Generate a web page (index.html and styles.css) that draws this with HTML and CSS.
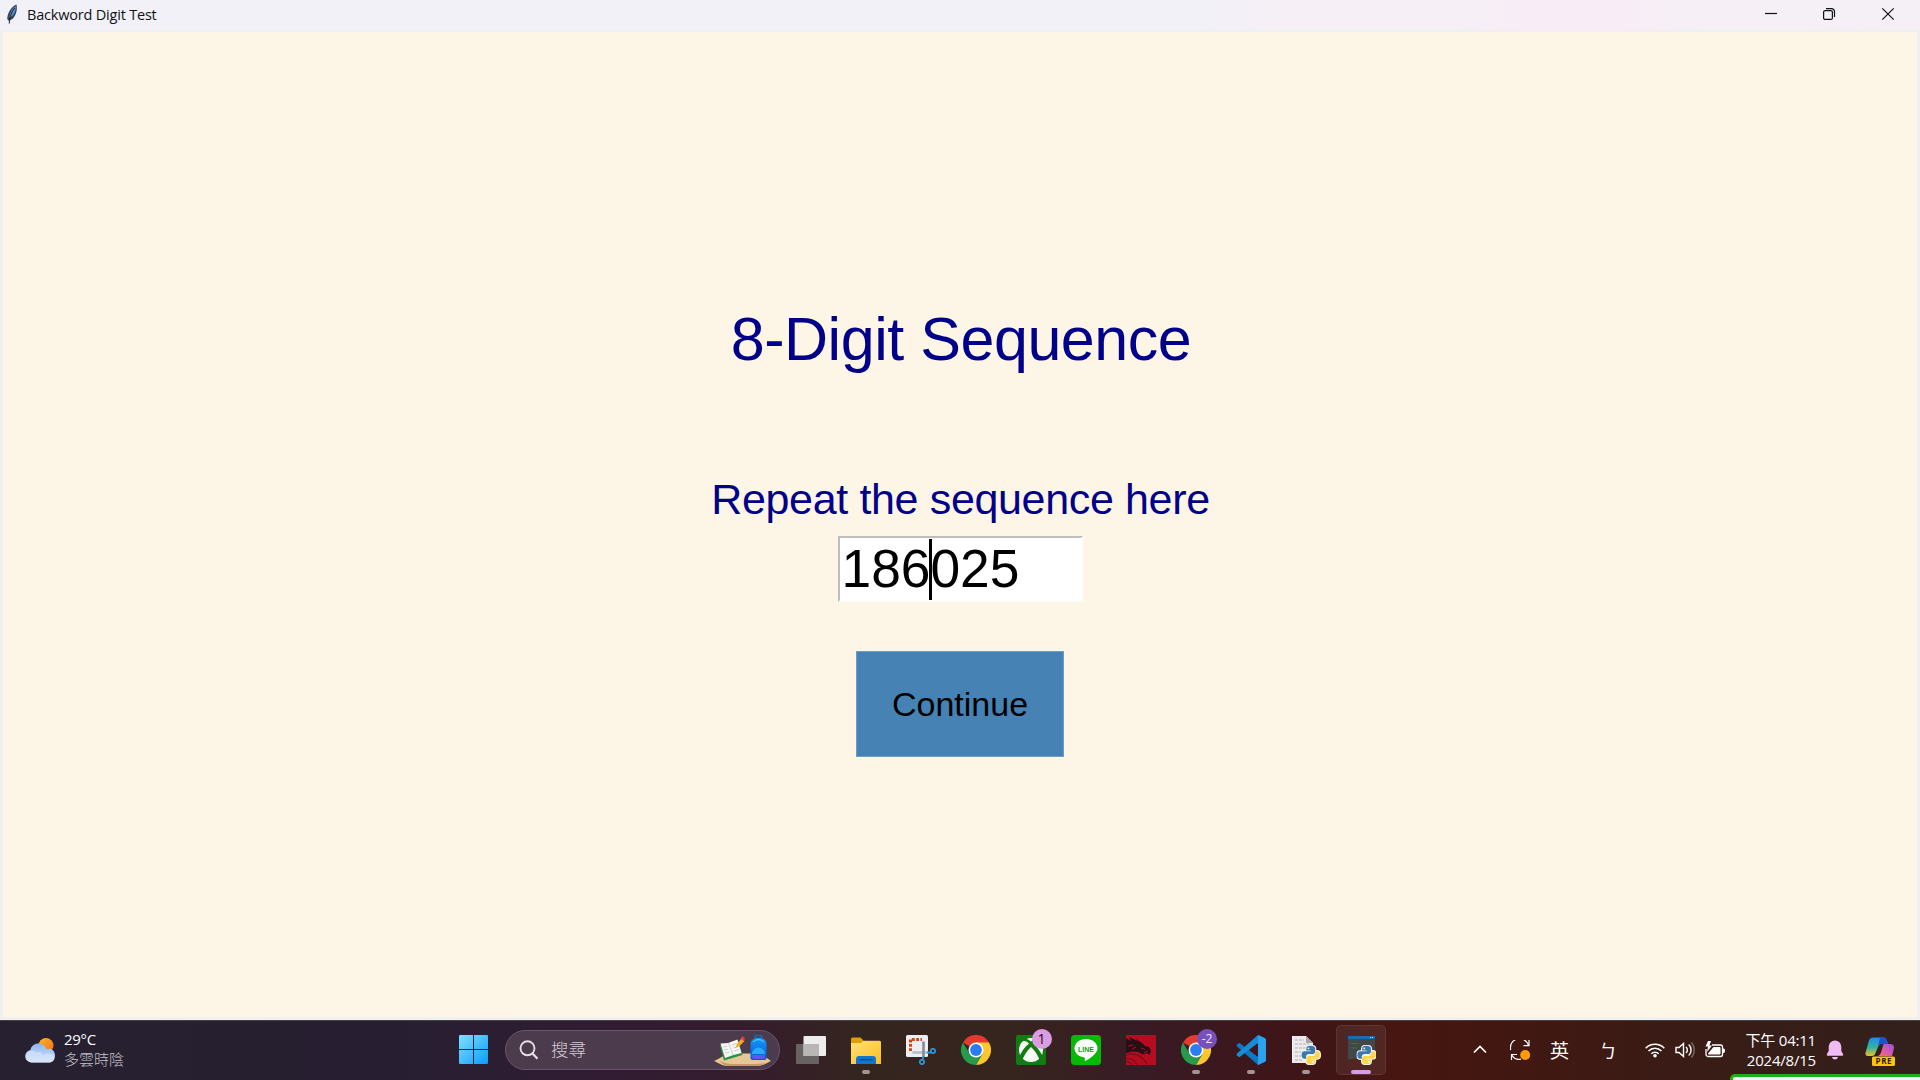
FILE: index.html
```html
<!DOCTYPE html>
<html lang="zh-Hant">
<head>
<meta charset="utf-8">
<title>Backword Digit Test</title>
<link rel="stylesheet" href="styles.css">
</head>
<body>
<svg class="defs" width="0" height="0">
  <defs>
    <linearGradient id="win" x1="0" y1="0" x2="1" y2="1"><stop offset="0" stop-color="#7fe0ff"/><stop offset="1" stop-color="#0a9bfb"/></linearGradient>
    <linearGradient id="cloud" x1="0" y1="0" x2="0" y2="1"><stop offset="0" stop-color="#8db4f2"/><stop offset="1" stop-color="#d6e4fb"/></linearGradient>
    <linearGradient id="sun" x1="0" y1="0" x2="1" y2="1"><stop offset="0" stop-color="#fdb62b"/><stop offset="1" stop-color="#f2700c"/></linearGradient>
    <linearGradient id="folder" x1="0" y1="0" x2="1" y2="1"><stop offset="0" stop-color="#ffe27a"/><stop offset="1" stop-color="#fdbd1f"/></linearGradient>
    <linearGradient id="pack" x1="0" y1="0" x2="0" y2="1"><stop offset="0" stop-color="#149af5"/><stop offset="1" stop-color="#0757d8"/></linearGradient>
    <linearGradient id="copA" x1="0" y1="0" x2="0" y2="1"><stop offset="0" stop-color="#1a8ef0"/><stop offset=".55" stop-color="#35b3a0"/><stop offset="1" stop-color="#ecc61a"/></linearGradient>
    <linearGradient id="copB" x1="1" y1="0" x2="0" y2="1"><stop offset="0" stop-color="#a34bea"/><stop offset="1" stop-color="#ff6a72"/></linearGradient>
    <symbol id="chrome" viewBox="0 0 30 30">
      <path d="M15 15 2 7.5A15 15 0 0 1 28 7.500Z" fill="#e33b2e"/>
      <path d="M15 15V7.500H28A15 15 0 0 1 15 30l6.500-11.250Z" fill="#fcc62d"/>
      <path d="M15 15 21.500 18.750 15 30A15 15 0 0 1 2 7.500L8.500 18.750Z" fill="#259b4b"/>
      <circle cx="15" cy="15" r="7.500" fill="#fff"/><circle cx="15" cy="15" r="5.900" fill="#2b7cf0"/>
    </symbol>
    <symbol id="python" viewBox="0 0 20 20">
      <g stroke="#f4f4f4" stroke-width="2.200" stroke-linejoin="round">
        <path id="snake" d="M9.800.800C6.500.800 5.600 1.800 5.600 3.500V5.600H10V6.300H3.600C1.700 6.300.800 7.800.800 10s1 3.800 2.800 3.800H5.300V11.500c0-1.500 1.200-2.600 2.700-2.600h4.200c1.200 0 2.200-1 2.200-2.200V3.500C14.400 1.600 12.800.800 9.800.800Z"/>
        <use href="#snake" transform="rotate(180 10 10)"/>
      </g>
      <use href="#snake" fill="#3a78ad"/>
      <use href="#snake" fill="#fdd648" transform="rotate(180 10 10)"/>
      <circle cx="7.700" cy="3.300" r=".9" fill="#fff"/><circle cx="12.300" cy="16.700" r=".9" fill="#fff"/>
    </symbol>
  </defs>
</svg>

<header class="titlebar">
  <svg class="feather" width="12" height="20" viewBox="0 0 12 20"><path d="M10.500.500C6 2 1.500 8 1.200 15L3 17l4-2.500C10 11 11.500 6 10.500.500Z" fill="#3a414b"/><path d="M9.800 2C6 4.500 3.600 9 3.200 14 7.500 12 10.200 7 9.800 2Z" fill="#5590dc"/><path d="M8.700 4C5.500 8 3.800 12 3.200 19.500" stroke="#1b1d22" fill="none"/></svg>
  <span class="title">Backword Digit Test</span>
  <div class="controls">
    <svg width="14" height="14" viewBox="0 0 14 14"><path d="M1 6.500H13" stroke="#111" stroke-width="1.200"/></svg>
    <svg width="14" height="14" viewBox="0 0 14 14" fill="none" stroke="#111" stroke-width="1.200"><rect x="1.600" y="3.600" width="8.800" height="8.800" rx="1.500"/><path d="M4 1.600H9.500A3 3 0 0 1 12.500 4.600V10"/></svg>
    <svg width="14" height="14" viewBox="0 0 14 14"><path d="M1.300 1.300 12.700 12.700M12.700 1.300 1.300 12.700" stroke="#111" stroke-width="1.200"/></svg>
  </div>
</header>

<main class="client">
  <h1 class="heading">8-Digit Sequence</h1>
  <label class="prompt">Repeat the sequence here</label>
  <div class="entry"><span>186</span><i class="caret"></i><span>025</span></div>
  <button class="continue">Continue</button>
</main>

<footer class="taskbar">
  <section class="weather">
    <svg width="32" height="28" viewBox="0 0 32 28"><circle cx="22" cy="8.500" r="7.500" fill="url(#sun)"/><path d="M7 25.500a6.300 6.300 0 0 1-.5-12.500C7 9 10.500 6.500 14.500 6.500c4 0 7 2.500 8 6 4.500-2.500 8.500 1.500 8.500 6s-3 7-6.500 7Z" fill="url(#cloud)"/><path d="M8 25.500a6 6 0 1 1 4.500-10c3-1.500 6 .3 6.800 3 4-3.500 11-2 11 2.500 0 3-2.500 4.500-5 4.500Z" fill="#d8e5fb" opacity=".65"/></svg>
    <div class="weather-text"><span>29°C</span><span class="dim">多雲時陰</span></div>
  </section>

  <nav class="apps">
    <div class="slot"><svg width="29" height="29" viewBox="0 0 29 29"><path d="M1 0H14V14H0V1a1 1 0 0 1 1-1ZM15 0H28a1 1 0 0 1 1 1V14H15ZM0 15H14V29H1a1 1 0 0 1-1-1ZM15 15H29V28a1 1 0 0 1-1 1H15Z" fill="url(#win)"/></svg></div>
    <div class="search">
      <svg width="20" height="20" viewBox="0 0 20 20" fill="none" stroke="#e4dde3" stroke-width="1.900"><circle cx="8.500" cy="8.300" r="7"/><path d="M13.500 13.500 18.500 18.700" stroke-width="2.300"/></svg>
      <span>搜尋</span>
      <svg class="school" width="58" height="32" viewBox="0 0 58 32"><path d="M0 26C8 23 10 18.500 18 18.500H42C50 19 52 23 57 26c-4 2-8 5-14 5H14C8 31 5 28 0 26Z" fill="#e6c795"/><path d="M6 26Q12 29.500 20 29H40Q50 29 53 27.500 48 31 43 31H14Q8 30 6 26Z" fill="#c49a66"/><path d="M6 10.500 24 5.500 28.500 20 10 25.500Z" fill="#2c9147"/><path d="M6.500 8.500 14 8 23.500 4.500 27.500 18 19.500 20 11 23Z" fill="#f5f5f2"/><path d="M14.500 8 19 20M9 12l4-.8M10 15l4-.8M11 18l4-.8M18 10l5-1.500M19 13l5-1.500M20 16l5-1.500" stroke="#c8cac5" fill="none" stroke-width=".9"/><path d="M21.500 13 23 9 27.500 3.500 30.500 6 25.500 11Z" fill="#f7a91e"/><path d="M26.500 3.500 28.500 1.200 31 3.300 29.500 6Z" fill="#e43c40"/><path d="M41 3a3.500 3 0 0 1 7 0" stroke="#0a70d8" stroke-width="1.500" fill="none"/><path d="M36.500 9C36.500 .5 52.500 .5 52.500 9V23a2 2 0 0 1-2 2H38.500a2 2 0 0 1-2-2Z" fill="url(#pack)"/><path d="M38 19a6.500 6.500 0 0 1 13 0" fill="#2aa9f8"/><path d="M38 20H51V21.500q0 2.500-2 2.500H40q-2 0-2-2.500Z" fill="#6556e8"/><path d="M39 7Q44.500 2 50 7" stroke="#61d1ff" fill="none"/></svg>
    </div>
    <div class="slot"><svg width="30" height="30" viewBox="0 0 30 30"><rect x="0" y="9" width="23" height="20" rx="1" fill="#666362"/><rect x="7.500" y="1" width="22.500" height="20" rx="1" fill="#ededed"/><path d="M7.500 9H23V21H7.500Z" fill="#b9b7b6"/></svg></div>
    <div class="slot"><svg width="30" height="30" viewBox="0 0 30 30"><path d="M0 4a1.500 1.500 0 0 1 1.500-1.500H9.500L13 6H29V14H0Z" fill="#dda005"/><path d="M0 8H9.500L13 5.800H28.500A1.500 1.500 0 0 1 30 7.300V29H0Z" fill="url(#folder)"/><path d="M5 29V24a3 3 0 0 1 3-3H22a3 3 0 0 1 3 3v5Z" fill="#1077cf"/><path d="M8.500 24.700H21.500" stroke="#064a92" stroke-width="1.300"/></svg><b class="run"></b></div>
    <div class="slot"><svg width="30" height="30" viewBox="0 0 30 30"><rect x="0" y="0" width="22" height="22" rx="1.500" fill="#eceff3"/><path d="M4.500 16V4.500H16" fill="none" stroke="#cf4413" stroke-width="3" stroke-dasharray="2.800 1.500"/><path d="M6.500 17.500H22" stroke="#b7bcc1" stroke-width="2.500"/><path d="M17.500 6.500V22" stroke="#858c93" stroke-width="2.600"/><path d="M21 17.500H25M17.500 21 16.500 25" stroke="#2899df" stroke-width="1.800"/><circle cx="27" cy="16" r="2.200" fill="none" stroke="#2899df" stroke-width="1.700"/><circle cx="16" cy="27" r="2.200" fill="none" stroke="#2899df" stroke-width="1.700"/></svg></div>
    <div class="slot"><svg width="30" height="30"><use href="#chrome"/></svg></div>
    <div class="slot"><svg width="30" height="30" viewBox="0 0 30 30"><rect width="30" height="30" rx="2" fill="#127c12"/><circle cx="15" cy="15" r="12" fill="#f7f9f7"/><path d="M6 3Q11 3 15 6.500 19 3 24 3L26 7Q21 4.500 17 8.500 24 14.500 27 22.500L24 26Q21 17.500 15 12 9 17.500 6 26L3 22.500Q6 14.500 13 8.500 9 4.500 4.500 7Z" fill="#127c12"/></svg><em class="badge">1</em></div>
    <div class="slot"><svg width="30" height="30" viewBox="0 0 30 30"><rect width="30" height="30" rx="3.500" fill="#05b905"/><path d="M15 4C8.500 4 3.500 8.200 3.500 13.300c0 4.700 4 8.400 9.700 9.200.9.200.6 1.300.5 2.500-.1 1 .6 1.200 1.500.6 4-2.300 11.300-7 11.300-12.300C26.500 8.200 21.500 4 15 4Z" fill="#fff"/><text x="15" y="16.500" text-anchor="middle" class="line-label" textLength="16">LINE</text></svg></div>
    <div class="slot"><svg width="30" height="30" viewBox="0 0 30 30"><rect width="30" height="30" fill="#b60c20"/><path d="M0 3 5 6 3 2 11 6 9 3.500 16 8 19 11 23 12 25 16 23.500 20 21 18 17 19.500 12 17 6 16.500 0 18Z" fill="#251016"/><path d="M0 20Q9 17 15 22T21 30M0 24Q7 22 11 30M0 27Q4 26 6 30" fill="none" stroke="#7e0b1c" stroke-width="1.200"/><path d="M15 13 19 14.500M18 17.500 22 16M2 11 7 10M6 14 10 12" stroke="#b60c20"/></svg></div>
    <div class="slot"><svg width="30" height="30"><use href="#chrome"/></svg><em class="badge purple">-2</em><b class="run"></b></div>
    <div class="slot"><svg width="30" height="30" viewBox="0 0 30 30"><path d="M22 0 29 3.200Q30 4 30 5V25q0 1-1 1.700L22 30 1 11.500Q0 10.500 1 9.500L2.500 8.300Q3.200 7.800 4 8.300L22 22Z" fill="#0c78c4"/><path d="M22 8 4 21.700Q3.200 22.200 2.500 21.700L1 20.500Q0 19.500 1 18.500L22 0Z" fill="#168bd6"/><path d="M22 0 29 3.200Q30 4 30 5V25q0 1-1 1.700L22 30Z" fill="#2ba2ed"/></svg><b class="run"></b></div>
    <div class="slot"><svg width="30" height="30" viewBox="0 0 30 30"><path d="M1 1H15L22 8V28H1Z" fill="#eceaea"/><path d="M15 1V8H22Z" fill="#aaa6a6"/><path d="M4 5H13M4 9H18M4 13H19M4 17H12M4 21H11M4 25H12" stroke="#b4b0b0" stroke-dasharray="3 1"/><path d="M1.500 1V28" stroke="#fff" stroke-dasharray="2 1.500"/><use href="#python" x="9.500" y="10" width="20.500" height="20"/></svg><b class="run"></b></div>
    <div class="slot active"><svg width="30" height="30" viewBox="0 0 30 30"><rect x="2" y="1" width="27" height="23" fill="#42474a"/><rect x="2" y="1" width="27" height="3" fill="#176dae"/><path d="M5 8.500H13M5 13H11M15 13H18" stroke="#357246" stroke-width="1.200"/><path d="M24 2.500h1M26 2.500h1" stroke="#cde"/><use href="#python" x="10.500" y="10" width="20" height="20"/></svg><b class="run"></b></div>
  </nav>

  <section class="tray">
    <div class="t-chevron"><svg width="14" height="9" viewBox="0 0 14 9"><path d="M1 7.500 7 1.500 13 7.500" fill="none" stroke="#fff" stroke-width="1.700"/></svg></div>
    <div class="t-sync"><svg width="20" height="20" viewBox="0 0 20 20" fill="none" stroke="#fff" stroke-width="1.200"><path d="M.700 10A9 9 0 0 1 18.500 5.500M19 0V5.700H13.500M1.500 20V14.500H7M1.500 14.500A9 9 0 0 0 11 19.200"/><circle cx="15.200" cy="15" r="5" fill="#ff9b09" stroke="none"/></svg></div>
    <div class="t-lang">英</div>
    <div class="t-ime">ㄅ</div>
    <div class="t-wifi"><svg width="20" height="16" viewBox="0 0 20 16" fill="none" stroke="#fff" stroke-width="1.500"><path d="M.700 6.200A13 13 0 0 1 19.300 6.200M3.500 9A9 9 0 0 1 16.500 9M6.300 11.800A5.200 5.200 0 0 1 13.700 11.800"/><circle cx="10" cy="13.800" r="1.800" fill="#fff" stroke="none"/></svg></div>
    <div class="t-sound"><svg width="20" height="16" viewBox="0 0 20 16" fill="none" stroke="#fff" stroke-width="1.400"><path d="M1 5.500H4L8.500 1.500V14.500L4 10.500H1Z"/><path d="M11 5a4 4 0 0 1 0 6M13.700 2.500a7.500 7.500 0 0 1 0 11"/><path d="M16.300.500a11 11 0 0 1 0 15" stroke="#7c6662"/></svg></div>
    <div class="t-battery"><svg width="20" height="17" viewBox="0 0 20 17"><path d="M7 4H15.500A2 2 0 0 1 17.500 6V13.500A2 2 0 0 1 15.500 15.500H3A2 2 0 0 1 1 13.500V8" fill="none" stroke="#fff" stroke-width="1.300"/><path d="M8.500 6H14.500Q15.500 6 15.500 7V12.500Q15.500 13.500 14.500 13.500H3.500L3 12.500Z" fill="#fff"/><path d="M18 7.500H18.700Q20 7.500 20 9.700T18.700 12H18ZM3 0 .500 5.500H3L2 11 7 4.500H4.500L6 0Z" fill="#fff"/></svg></div>
    <div class="clock"><span>下午 04:11</span><span class="date">2024/8/15</span></div>
    <div class="t-bell"><svg width="18" height="20" viewBox="0 0 18 20"><path d="M9 .5A6.300 6.300 0 0 0 2.700 6.800V11L.8 14.300Q.5 15.800 2 15.800H16Q17.500 15.800 17.200 14.300L15.300 11V6.800A6.300 6.300 0 0 0 9 .5ZM6 17H12Q11.500 19.500 9 19.500T6 17Z" fill="#efbbf4"/></svg></div>
    <div class="t-copilot"><svg width="30" height="30" viewBox="0 0 30 30"><path d="M8 1.500H19Q21.500 2 22 5L23 8H16Q14 8 13 11L10.500 17Q9.500 20 7 20H3Q-.5 20 .7 16L4 4.500Q5 1.500 8 1.500Z" fill="url(#copA)"/><path d="M15 1.500H19Q21.500 2 22 5L23 8H16Q14 8 13 10Z" fill="#2050cf"/><path d="M18.500 8H25.500Q30 8.500 28.800 13L27 20H13Q15.500 19 16.500 15Z" fill="url(#copB)"/><rect x="7" y="20.500" width="23" height="9.500" rx="1.500" fill="#fcc603"/><text x="18.500" y="28.300" text-anchor="middle" class="pre" textLength="16">PRE</text></svg></div>
  </section>
</footer>
<div class="peek"></div>
</body>
</html>
```
FILE: styles.css
```css
* { box-sizing: border-box; }
body {
  margin: 0;
  width: 1920px;
  height: 1080px;
  overflow: hidden;
  display: flex;
  flex-direction: column;
  background: #f0f0f0;
  font-family: "Liberation Sans", sans-serif;
}
svg { display: block; flex: none; }
.defs { position: absolute; }

.titlebar {
  height: 32px;
  flex: none;
  display: flex;
  align-items: flex-start;
  padding-left: 6px;
  background: linear-gradient(90deg, #f2f1f8 0, #f2f1f8 1200px, #f6eff6 1280px, #f6eff6 1460px, #f8edf6 1520px, #f8edf6 1620px, #f6eff6 1700px, #f4f0f6 1920px);
  border-bottom: 2px solid #f0f0ef;
}
.feather { margin-top: 4px; }
.title {
  margin-left: 9px;
  font: 14.500px/29px "Open Sans", sans-serif;
  letter-spacing: -0.2px;
  color: #111;
}
.controls { margin: 7px 25px 0 auto; display: flex; gap: 44.500px; }
.controls svg:nth-child(2) { margin: 0 1px 0 -1px; }

.client {
  flex: none;
  height: 985px;
  margin: 0 3px;
  padding-top: 273px;
  background: #fdf5e6;
  display: flex;
  flex-direction: column;
  align-items: center;
}
.heading {
  margin: 0;
  padding-left: 2px;
  font-weight: 400;
  font-size: 61px;
  letter-spacing: -0.46px;
  line-height: 69px;
  color: #00008b;
  white-space: nowrap;
}
.prompt {
  margin-top: 100px;
  padding-left: 1px;
  font-size: 43px;
  letter-spacing: -0.35px;
  line-height: 50px;
  color: #00008b;
  white-space: nowrap;
}
.entry {
  margin-top: 12px;
  width: 245px;
  height: 66px;
  padding-left: 2px;
  display: flex;
  align-items: center;
  background: #fff;
  border: 2px solid #fffdf9;
  border-top-color: #bdbdbd;
  border-left-color: #bdbdbd;
  font-size: 53.300px;
  line-height: 60px;
  color: #000;
}
.entry span { margin-top: -1px; }
.caret { width: 3px; height: 61px; margin: 0 -1.500px; background: #000; }
.continue {
  margin-top: 49px;
  width: 208px;
  height: 106px;
  padding: 0;
  border: 1px solid #6c9dc3;
  background: #4682b4;
  font-family: inherit;
  font-size: 34px;
  color: #000;
}

.taskbar {
  flex: none;
  height: 60px;
  margin-top: 3px;
  display: flex;
  color: #fff;
  border-top: 1px solid #4a4142;
  background: linear-gradient(90deg, #262030 0, #271f31 400px, #311c34 600px, #351d2c 760px, #35251f 860px, #36241f 1020px, #381b25 1140px, #3e1518 1290px, #471610 1400px, #421711 1500px, #391c16 1700px, #33201c 1920px);
}
.weather {
  width: 446px;
  display: flex;
  padding: 8px 0 0 24px;
  font-family: "Open Sans", "Noto Sans CJK TC", sans-serif;
}
.weather svg { margin-top: 8px; }
.weather-text { margin-left: 8px; display: flex; flex-direction: column; font-size: 15px; line-height: 20px; letter-spacing: -0.3px; }
.dim { color: #c5c0c9; font-family: "Noto Sans CJK TC", sans-serif; font-weight: 300; letter-spacing: 0; }

.apps { display: flex; align-items: flex-start; padding-top: 4px; }
.slot {
  position: relative;
  width: 55px;
  height: 50px;
  display: flex;
  align-items: center;
  justify-content: center;
}
.slot > svg { margin-top: -1px; }
.run {
  position: absolute;
  bottom: 1px;
  left: 23.500px;
  width: 8px;
  height: 4px;
  border-radius: 2px;
  background: #a39595;
}
.active { width: 50px; margin-left: 2px; border-radius: 5px; background: #ffffff12; box-shadow: inset 0 0 0 1px #ffffff14; }
.active .run { left: 15px; width: 20px; background: #d99be8; }
.badge {
  position: absolute;
  left: 28px;
  top: 4px;
  width: 20px;
  height: 20px;
  border-radius: 50%;
  background: #db9ce3;
  color: #1c1020;
  font: 14px/20px "Open Sans", sans-serif;
  text-align: center;
}
.purple { left: 28.500px; background: #7750bb; color: #f0e9fb; font-size: 12px; }
.search {
  width: 275px;
  height: 40px;
  margin: 5px 3.500px 0 4px;
  padding: 0 7px 0 13px;
  display: flex;
  align-items: center;
  border-radius: 20px;
  border: 1px solid #69556b;
  background: #4c3a4d;
  color: #d3cad3;
  font: 300 17.500px/36px "Noto Sans CJK TC", sans-serif;
}
.search span { margin: -2px 0 0 12px; }
.school { margin: 2px 0 0 auto; }
.line-label { font: bold 7px "Liberation Sans", sans-serif; fill: #05a905; }
.pre { font: bold 8px "Open Sans", sans-serif; fill: #2a2100; }

.tray { margin-left: auto; margin-right: 14px; height: 57px; display: flex; align-items: center; }
.tray > div { display: flex; align-items: center; justify-content: center; }
.t-chevron, .t-sync, .t-lang { width: 40px; }
.t-lang, .t-ime { font: 19px/58px "Noto Sans CJK TC", sans-serif; }
.t-lang { padding-right: 1px; }
.t-ime { width: 56px; margin-right: 4px; font-size: 18px; }
.t-wifi { width: 30px; }
.t-sound { width: 30px; }
.t-battery { width: 31px; padding-right: 2px; }
.tray > .clock {
  width: 85px;
  height: 42px;
  flex-direction: column;
  align-items: flex-end;
  font: 15px/20px "Open Sans", "Noto Sans CJK TC", sans-serif;
  letter-spacing: -0.2px;
  white-space: nowrap;
}
.t-bell { width: 38px; }
.t-copilot { width: 52px; padding-top: 3px; }

.peek {
  position: absolute;
  left: 1730px;
  top: 1074px;
  width: 200px;
  height: 20px;
  border: 3px solid #20ae1c;
  border-radius: 5px;
  background: #f6f6f6;
}
```
